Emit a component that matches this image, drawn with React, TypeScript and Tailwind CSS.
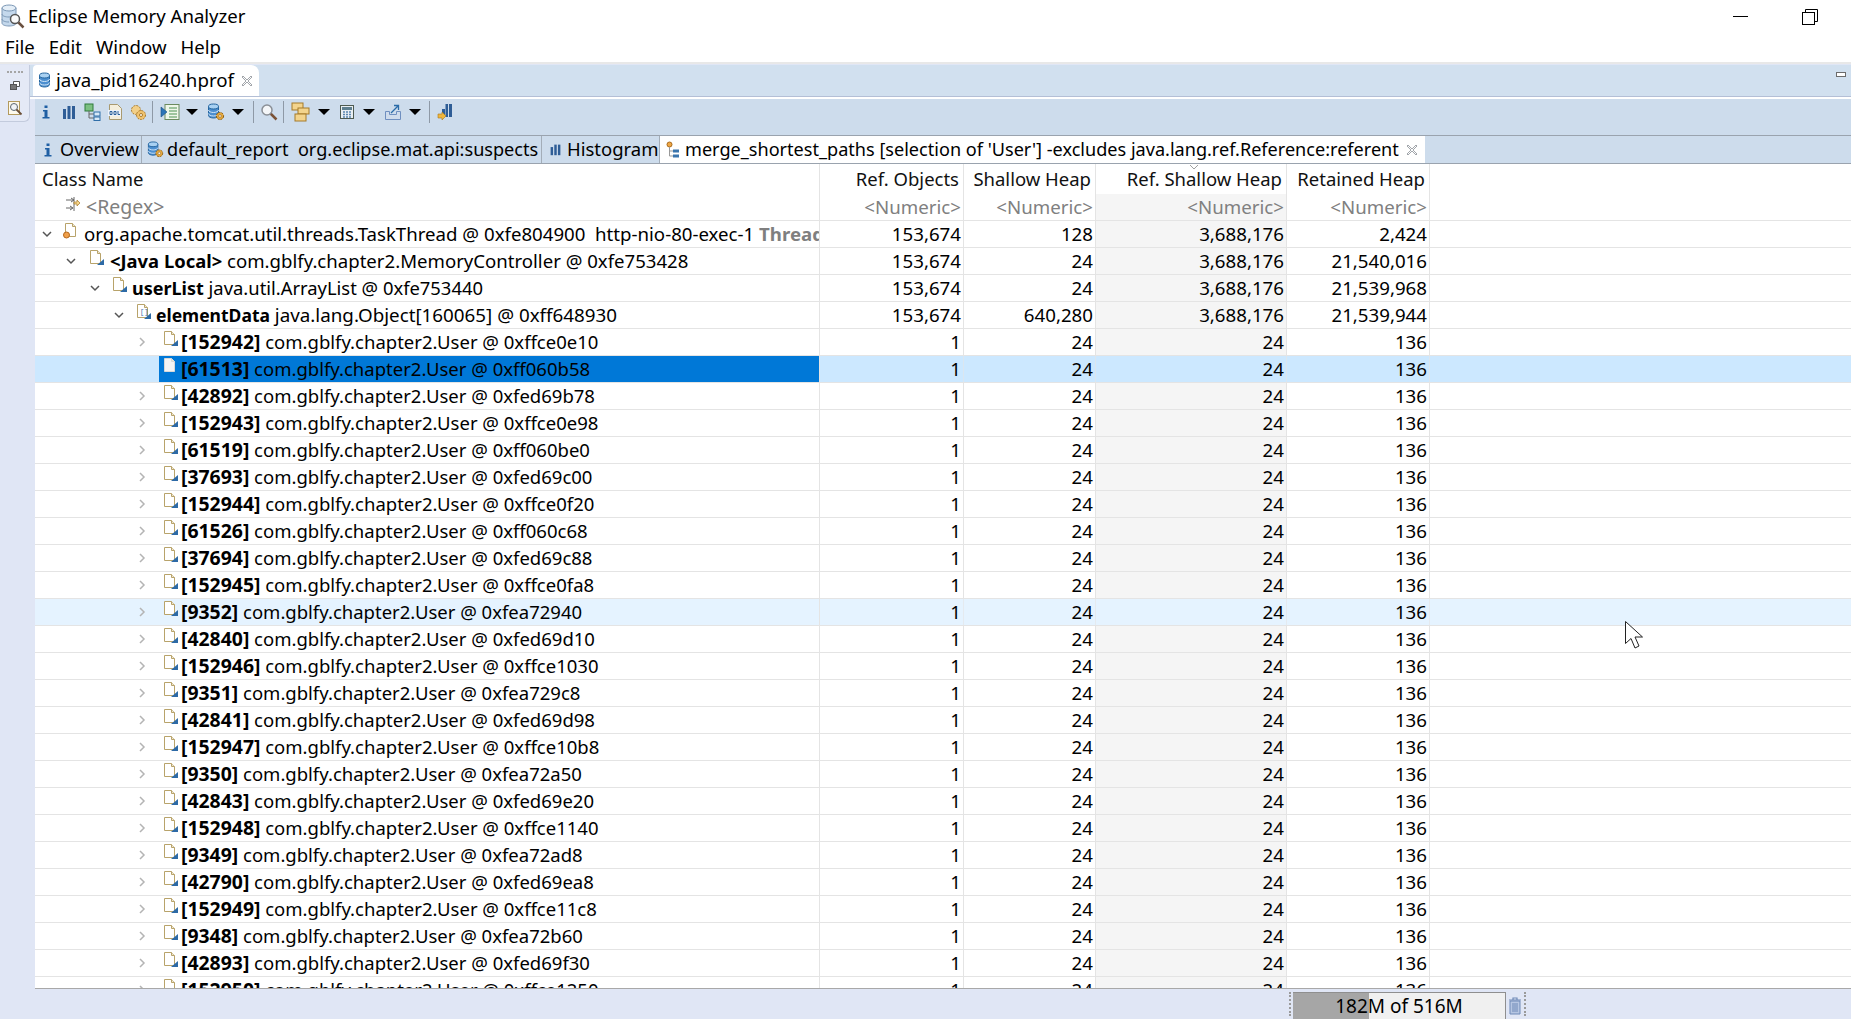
import type { ReactNode } from 'react';

const FONT = "font-['Noto_Sans',sans-serif]";

type TreeRow = {
  level: number;
  bold: string;
  text: string;
  kind: 'thread' | 'object' | 'array';
  values: string[];
  muted?: string;
  boldSize?: string;
  textSize?: string;
};

const TOP_ROWS: TreeRow[] = [
  { level: 0, bold: '', text: 'org.apache.tomcat.util.threads.TaskThread @ 0xfe804900  http-nio-80-exec-1 ', muted: 'Thread', kind: 'thread', textSize: 'text-[18.65px]', values: ['153,674', '128', '3,688,176', '2,424'] },
  { level: 1, bold: '<Java Local>', text: ' com.gblfy.chapter2.MemoryController @ 0xfe753428', kind: 'object', boldSize: 'text-[18.4px]', textSize: 'text-[18.6px]', values: ['153,674', '24', '3,688,176', '21,540,016'] },
  { level: 2, bold: 'userList', text: ' java.util.ArrayList @ 0xfe753440', kind: 'object', boldSize: 'text-[18px]', textSize: 'text-[18.4px]', values: ['153,674', '24', '3,688,176', '21,539,968'] },
  { level: 3, bold: 'elementData', text: ' java.lang.Object[160065] @ 0xff648930', kind: 'array', boldSize: 'text-[17.5px]', textSize: 'text-[18.8px]', values: ['153,674', '640,280', '3,688,176', '21,539,944'] },
];

const USERS: [string, string][] = [
  ['152942', '0xffce0e10'],
  ['61513', '0xff060b58'],
  ['42892', '0xfed69b78'],
  ['152943', '0xffce0e98'],
  ['61519', '0xff060be0'],
  ['37693', '0xfed69c00'],
  ['152944', '0xffce0f20'],
  ['61526', '0xff060c68'],
  ['37694', '0xfed69c88'],
  ['152945', '0xffce0fa8'],
  ['9352', '0xfea72940'],
  ['42840', '0xfed69d10'],
  ['152946', '0xffce1030'],
  ['9351', '0xfea729c8'],
  ['42841', '0xfed69d98'],
  ['152947', '0xffce10b8'],
  ['9350', '0xfea72a50'],
  ['42843', '0xfed69e20'],
  ['152948', '0xffce1140'],
  ['9349', '0xfea72ad8'],
  ['42790', '0xfed69ea8'],
  ['152949', '0xffce11c8'],
  ['9348', '0xfea72b60'],
  ['42893', '0xfed69f30'],
  ['152950', '0xffce1250'],
];

const INDENT = ['w-0', 'w-[24px]', 'w-[48px]', 'w-[72px]', 'w-[95px]'];
const ICON_BOX = ['w-[25px]', 'w-[27px]', 'w-[25px]', 'w-[25px]', 'ml-[5px] w-[22px]'];

function PageIcon({ kind = 'object', pale = false }: { kind?: 'thread' | 'object' | 'array'; pale?: boolean }) {
  return (
    <svg width="17" height="18" viewBox="0 0 17 18" className="shrink-0">
      <path d="M2.5 1.5h7l3 3v10h-10z" fill={pale ? '#f4f4f4' : '#fff'} stroke={pale ? '#d8d8d8' : '#b8a36a'} />
      <path d="M9.5 1.5v3h3" fill="#efe8d2" stroke={pale ? '#d8d8d8' : '#b8a36a'} />
      {kind === 'thread' && <circle cx="3.5" cy="13" r="3" fill="#f0a04a" stroke="#b5671c" />}
      {kind === 'array' && <text x="5" y="11" fontSize="7" fill="#3b6ea8" fontFamily="Liberation Mono">[]</text>}
      {kind !== 'thread' && !pale && <path d="M9 16h7v-6z" fill="#2d6aa6" />}
    </svg>
  );
}

function Chevron({ open, dim }: { open: boolean; dim?: boolean }) {
  return (
    <svg width="10" height="10" viewBox="0 0 10 10">
      {open ? (
        <path d="M1 3l4 4 4-4" fill="none" stroke="#555" strokeWidth="1.5" />
      ) : (
        <path d="M3 1l4 4-4 4" fill="none" stroke={dim ? '#b4b4b4' : '#888'} strokeWidth="1.5" />
      )}
    </svg>
  );
}

function ClassCell({ row, open, selected }: { row: TreeRow; open: boolean; selected?: boolean }) {
  return (
    <div className="flex h-full w-[785px] shrink-0 items-center overflow-hidden border-r border-[#e4e4e4]">
      <div className={`${INDENT[row.level]} shrink-0`} />
      <div className="flex w-[24px] shrink-0 justify-center">
        {!selected && <Chevron open={open} dim={!open} />}
      </div>
      <div className={`flex h-full min-w-0 flex-1 items-center ${selected ? 'ml-[5px] bg-[#0078d7]' : ''}`}>
        <div className={`flex ${selected ? 'w-[22px]' : ICON_BOX[row.level]} shrink-0 -translate-y-[3px] justify-center`}>
          <PageIcon kind={row.kind} pale={selected} />
        </div>
        <span className={`whitespace-pre ${row.textSize ?? 'text-[18.5px]'}`}>
          {row.bold && <span className={`font-bold ${row.boldSize ?? 'text-[19.4px]'}`}>{row.bold}</span>}
          {row.text}
          {row.muted && <span className="font-bold text-[#7f7f7f]">{row.muted}</span>}
        </span>
      </div>
    </div>
  );
}

function NumCell({ width, tinted, soft, children }: { width: string; tinted?: boolean; soft?: boolean; children: ReactNode }) {
  return (
    <div className={`flex h-full ${width} shrink-0 items-center justify-end border-r pr-[2px] ${soft ? 'border-[#e4e4e4]/60' : 'border-[#e4e4e4]'} ${tinted ? 'bg-[#f5f5f5]' : ''}`}>
      {children}
    </div>
  );
}

function Row({ row, open, selected, hovered }: { row: TreeRow; open: boolean; selected?: boolean; hovered?: boolean }) {
  const soft = selected || hovered;
  return (
    <div className={`flex h-[27px] shrink-0 items-center border-b border-[#e4e4e4] text-black ${selected ? 'bg-[#cce8ff]' : hovered ? 'bg-[#e5f3ff]' : ''}`}>
      <ClassCell row={row} open={open} selected={selected} />
      <div className="contents text-[18.7px]">
        <NumCell width="w-[144px]" soft={soft}>{row.values[0]}</NumCell>
        <NumCell width="w-[132px]" soft={soft}>{row.values[1]}</NumCell>
        <NumCell width="w-[191px]" soft={soft} tinted={!soft}>{row.values[2]}</NumCell>
        <NumCell width="w-[143px]" soft={soft}>{row.values[3]}</NumCell>
      </div>
    </div>
  );
}

function DropArrow() {
  return <div className="h-0 w-0 border-x-[6px] border-t-[6px] border-x-transparent border-t-black" />;
}

function ToolSep() {
  return <div className="h-[22px] w-px shrink-0 bg-[#8e99a6]" />;
}

function Slot({ width, children }: { width: string; children: ReactNode }) {
  return <div className={`flex ${width} shrink-0 justify-center`}>{children}</div>;
}

function DbIcon({ gear = true, size = 18 }: { gear?: boolean; size?: number }) {
  return (
    <svg width={size} height={size} viewBox="0 0 18 18" className="shrink-0">
      <path d="M1.5 3.5v9c0 1.5 2.5 2.5 5 2.5s5-1 5-2.5v-9z" fill="#4c8fd0" stroke="#24659f" />
      <ellipse cx="6.5" cy="3.5" rx="5" ry="2.5" fill="#a9d1f2" stroke="#24659f" />
      <path d="M1.5 7c0 1.5 2.5 2.5 5 2.5s5-1 5-2.5M1.5 10.5c0 1.5 2.5 2.5 5 2.500s5-1 5-2.500" fill="none" stroke="#cfe4f6" />
      {gear && (
        <>
          <circle cx="13" cy="13" r="3.600" fill="#e5a93d" stroke="#8a5a12" strokeDasharray="2 1" />
          <circle cx="13" cy="13" r="1.300" fill="#fff" stroke="#8a5a12" strokeWidth="0.600" />
        </>
      )}
    </svg>
  );
}

function BarsIcon({ size = 16 }: { size?: number }) {
  return (
    <svg width={size} height={size} viewBox="0 0 16 16" className="shrink-0">
      <rect x="2" y="5" width="3" height="10" fill="#2e5d96" />
      <rect x="6.5" y="2" width="3" height="13" fill="#2e5d96" />
      <rect x="11" y="2" width="3" height="13" fill="#2e5d96" />
    </svg>
  );
}

function InfoIcon() {
  return (
    <svg width="12" height="16" viewBox="0 0 12 16" className="shrink-0">
      <rect x="4.5" y="1.5" width="3" height="2.5" fill="#1f5fa3" />
      <path d="M3 6h4.5v7H9.5v1.500H2.500V13h2V7.500H3z" fill="#1f5fa3" />
    </svg>
  );
}

function MergeIcon() {
  return (
    <svg width="14" height="18" viewBox="0 0 14 18" className="shrink-0">
      <circle cx="3.5" cy="3.5" r="2.5" fill="#efa745" stroke="#a9691a" />
      <path d="M3.5 6v9M3.5 10h4M3.5 15h4" stroke="#999" fill="none" />
      <rect x="7" y="8.5" width="6" height="3" fill="#3a75ad" />
      <rect x="7" y="13.5" width="6" height="3" fill="#3a75ad" />
    </svg>
  );
}

function Toolbar() {
  return (
    <div className="flex h-[36px] shrink-0 items-center bg-[#cddcec] pb-[10px]">
      <Slot width="w-[22px]"><InfoIcon /></Slot>
      <Slot width="w-[24px]"><BarsIcon /></Slot>
      <Slot width="w-[24px]">
        <svg width="18" height="18" viewBox="0 0 18 18" className="shrink-0">
          <rect x="1" y="1" width="8" height="7" fill="#7cc082" stroke="#2f7a3a" />
          <path d="M5 8v7h5M5 11h5" stroke="#666" fill="none" />
          <rect x="10" y="9" width="6" height="4" fill="#d7e8f7" stroke="#2f6ea8" />
          <rect x="10" y="14" width="6" height="3.5" fill="#d7e8f7" stroke="#2f6ea8" />
        </svg>
      </Slot>
      <Slot width="w-[20px]">
        <svg width="17" height="18" viewBox="0 0 17 18" className="shrink-0">
          <path d="M2.5 1.500h8l4 4v11h-12z" fill="#f5efdd" stroke="#a99a70" />
          <rect x="1" y="7" width="13" height="6" fill="#eef3f9" />
          <path d="M3 8.500h2v3H3zM7 8.500h2v3H7z" fill="none" stroke="#2a5f98" />
          <path d="M11 8v3.500h2" fill="none" stroke="#2a5f98" />
        </svg>
      </Slot>
      <Slot width="w-[26px]">
        <svg width="18" height="18" viewBox="0 0 18 18" className="shrink-0">
          <circle cx="7" cy="7" r="4.500" fill="#f2cf87" stroke="#a87a2a" strokeDasharray="2 1" />
          <circle cx="12" cy="12" r="4.500" fill="#f0c26e" stroke="#a87a2a" strokeDasharray="2 1" />
          <circle cx="12" cy="12" r="1.500" fill="#fff" stroke="#a87a2a" />
        </svg>
      </Slot>
      <Slot width="w-[2px]"><ToolSep /></Slot>
      <Slot width="w-[34px]">
        <svg width="20" height="18" viewBox="0 0 20 18" className="shrink-0">
          <rect x="5" y="1.500" width="14" height="15" fill="#eef6ea" stroke="#6b8a5f" />
          <path d="M9 5h8M9 8h8M9 11h8M9 14h8" stroke="#4d9252" />
          <path d="M1 4l6 5-6 5z" fill="#2b74b8" stroke="#1b4f82" strokeWidth="0.600" />
        </svg>
      </Slot>
      <Slot width="w-[10px]"><DropArrow /></Slot>
      <Slot width="w-[38px]"><DbIcon /></Slot>
      <Slot width="w-[6px]"><DropArrow /></Slot>
      <Slot width="w-[24px]"><ToolSep /></Slot>
      <Slot width="w-[8px]">
        <svg width="18" height="18" viewBox="0 0 18 18" className="shrink-0">
          <path d="M10.500 10.500l6 6" stroke="#7a5236" strokeWidth="2.500" />
          <circle cx="7" cy="7" r="5" fill="#f4f6f8" stroke="#8a8f96" strokeWidth="1.500" />
        </svg>
      </Slot>
      <Slot width="w-[20px]"><ToolSep /></Slot>
      <Slot width="w-[16px]">
        <svg width="20" height="20" viewBox="0 0 20 20" className="shrink-0">
          <rect x="1" y="1" width="11" height="7" fill="#f3d48d" stroke="#a67a28" />
          <rect x="7" y="6" width="11" height="6" fill="#f3d48d" stroke="#a67a28" />
          <rect x="4" y="12" width="11" height="7" fill="#f3d48d" stroke="#a67a28" />
        </svg>
      </Slot>
      <Slot width="w-[30px]"><DropArrow /></Slot>
      <Slot width="w-[16px]">
        <svg width="16" height="16" viewBox="0 0 16 16" className="shrink-0">
          <rect x="1.500" y="1.500" width="13" height="13" fill="#e8eef2" stroke="#4d5a50" />
          <rect x="3" y="3" width="10" height="3" fill="#5d7f8f" />
          <path d="M4 8h2M7 8h2M10 8h2M4 10.500h2M7 10.500h2M10 10.500h2M4 13h2M7 13h2M10 13h2" stroke="#5a86b0" strokeWidth="1.400" />
        </svg>
      </Slot>
      <Slot width="w-[28px]"><DropArrow /></Slot>
      <Slot width="w-[20px]">
        <svg width="18" height="18" viewBox="0 0 18 18" className="shrink-0">
          <path d="M1.500 8.500v8h15v-8h-4v3h-7v-3z" fill="#cfdcec" stroke="#6f8fc0" />
          <path d="M7 10l7-7M10 2.500h4.500V7" fill="none" stroke="#2a6ba8" strokeWidth="1.300" />
        </svg>
      </Slot>
      <Slot width="w-[24px]"><DropArrow /></Slot>
      <Slot width="w-[4px]"><ToolSep /></Slot>
      <Slot width="w-[28px]">
        <svg width="16" height="18" viewBox="0 0 16 18" className="shrink-0">
          <rect x="5" y="6" width="3" height="8" fill="#2e5d96" />
          <rect x="8.500" y="1" width="2.500" height="13" fill="#2e5d96" />
          <rect x="12" y="1" width="3" height="13" fill="#2e5d96" />
          <path d="M1 11h4v-2l4 4-4 4v-2H1z" fill="#f0b63c" stroke="#a8791c" strokeWidth="0.600" />
        </svg>
      </Slot>
    </div>
  );
}

function EditorTab({ icon, label, width, active, close, size = 'text-[18.1px]' }: { icon: ReactNode; label: string; width: string; active?: boolean; close?: boolean; size?: string }) {
  return (
    <div className={`flex h-full shrink-0 items-center border-r border-[#a3adb8] pl-[5px] ${width} ${active ? 'border-r-0 bg-white' : ''}`}>
      <div className="flex w-[16px] shrink-0 justify-center">{icon}</div>
      <span className={`ml-[4px] whitespace-pre ${size}`}>{label}</span>
      {close && <CloseX />}
    </div>
  );
}

function CloseX() {
  return (
    <svg width="12" height="12" viewBox="0 0 12 12" className="ml-[7px] shrink-0">
      <path d="M2 1l4 4 4-4 1 1-4 4 4 4-1 1-4-4-4 4-1-1 4-4-4-4z" fill="#fff" stroke="#8a8f96" strokeWidth="0.800" />
    </svg>
  );
}

function Grip() {
  return <div className="h-[24px] w-0 border-l-2 border-dotted border-[#9a9a9a]" />;
}

export default function App() {
  return (
    <div className={`flex h-[1019px] w-[1851px] flex-col overflow-hidden bg-[#e0e6f5] text-[18.6px] leading-none text-black ${FONT}`}>
      {/* title bar */}
      <div className="flex h-[33px] shrink-0 items-center bg-white">
        <svg width="24" height="26" viewBox="0 0 24 26" className="ml-[1px] shrink-0">
          <path d="M1 4v15c0 2 3.500 3 7 3s7-1 7-3V4z" fill="#c4d8ec" stroke="#7c98b6" />
          <ellipse cx="8" cy="4" rx="7" ry="3" fill="#e4eef7" stroke="#7c98b6" />
          <path d="M1 10c0 2 3.500 3 7 3s7-1 7-3M1 15c0 2 3.500 3 7 3" fill="none" stroke="#7c98b6" />
          <circle cx="14" cy="15" r="4.500" fill="#fafafa" stroke="#555" strokeWidth="1.500" />
          <path d="M17.500 18.500l5 5" stroke="#6a5040" strokeWidth="2.500" />
        </svg>
        <span className="ml-[3px]">Eclipse Memory Analyzer</span>
        <div className="ml-auto mr-[54px] h-px w-[15px] bg-black" />
        <svg width="16" height="16" viewBox="0 0 16 16" className="mr-[33px]">
          <path d="M3.500 3.500v-3h12v12h-3" fill="none" stroke="#000" />
          <rect x="0.500" y="3.500" width="12" height="12" fill="#fff" stroke="#000" />
        </svg>
      </div>

      {/* menu bar */}
      <div className="flex h-[29px] shrink-0 items-center gap-[14px] bg-white pl-[5px]">
        <span>File</span>
        <span>Edit</span>
        <span>Window</span>
        <span>Help</span>
      </div>
      <div className="h-[2px] shrink-0 bg-[#e8e8e8]" />

      <div className="flex min-h-0 flex-1">
        {/* trim stack */}
        <div className="mt-[1px] h-[57px] w-[30px] shrink-0 rounded-br-[6px] border-r border-b border-[#c3cbdd] bg-[#e4e9f6]">
          <div className="mx-auto mt-[6px] w-[16px] border-t-2 border-dotted border-[#a5a5a5]" />
          <svg width="14" height="14" viewBox="0 0 14 14" className="mx-auto mt-[6px]">
            <path d="M5.500 5V2.500h6v5H9" fill="#fff" stroke="#555" />
            <rect x="2.500" y="5.500" width="6" height="5" fill="#777" stroke="#555" />
          </svg>
          <svg width="16" height="16" viewBox="0 0 16 16" className="mx-auto mt-[7px]">
            <rect x="1.500" y="1.500" width="11" height="13" fill="#fdf9ec" stroke="#b39a5d" />
            <circle cx="7" cy="7" r="3.500" fill="#f0f4f7" stroke="#5b6670" />
            <path d="M9.500 9.500l5 5" stroke="#6a4e35" strokeWidth="1.800" />
          </svg>
        </div>

        <div className="flex min-w-0 flex-1 flex-col">
          {/* editor tab strip */}
          <div className="mt-[1px] flex h-[32px] shrink-0 items-stretch border-b border-[#b4bfd6] bg-[#d1e0ef] pl-[3px]">
            <div className="flex w-[226px] items-center rounded-tl-[4px] rounded-tr-[8px] bg-white pl-[5px]">
              <DbIcon gear={false} size={18} />
              <span className="whitespace-pre text-[18.7px]">java_pid16240.hprof</span>
              <CloseX />
            </div>
            <div className="relative ml-auto">
              <div className="mr-[5px] mt-[7px] h-[5px] w-[10px] border border-[#6b6b6b] bg-white" />
            </div>
          </div>

          <div className="h-[2px] shrink-0 bg-white" />

          <div className="flex min-h-0 flex-1 flex-col pl-[5px]">
            <Toolbar />

            <div className="flex h-[29px] shrink-0 items-center border-y border-[#9aa3ae] bg-[#cddcec]">
              <EditorTab icon={<InfoIcon />} label="Overview" width="w-[107px]" />
              <EditorTab icon={<DbIcon size={17} />} label="default_report  org.eclipse.mat.api:suspects" width="w-[400px]" />
              <EditorTab icon={<BarsIcon size={13} />} label="Histogram" width="w-[118px]" size="text-[18.5px]" />
              <EditorTab icon={<MergeIcon />} label="merge_shortest_paths [selection of 'User'] -excludes java.lang.ref.Reference:referent" width="w-[765px]" active close />
            </div>

            {/* table */}
            <div className="relative min-h-0 flex-1 overflow-hidden border-b border-[#a8a8a8] bg-white">
              <div className="flex h-[30px] items-center text-[18.5px] text-[#111]">
                <div className="flex h-full w-[785px] shrink-0 items-center border-r border-[#e4e4e4] pl-[7px]">Class Name</div>
                <div className="flex h-full w-[144px] shrink-0 items-center justify-end border-r border-[#e4e4e4] pr-[4px]">Ref. Objects</div>
                <div className="flex h-full w-[132px] shrink-0 items-center justify-end border-r border-[#e4e4e4] pr-[4px]">Shallow Heap</div>
                <div className="flex h-full w-[191px] shrink-0 items-center justify-end border-r border-[#e4e4e4] pr-[4px]">Ref. Shallow Heap</div>
                <div className="flex h-full w-[143px] shrink-0 items-center justify-end border-r border-[#e4e4e4] pr-[4px]">Retained Heap</div>
              </div>
              <div className="flex h-[27px] items-center border-b border-[#e4e4e4] text-[18.7px] text-[#808080]">
                <div className="flex h-full w-[785px] shrink-0 items-center border-r border-[#e4e4e4] pl-[30px]">
                  <svg width="16" height="18" viewBox="0 0 16 18" className="-translate-y-[2px]">
                    <path d="M1 4h8M1 12h6M6 2l3 2-3 2M5 10l3 2-3 2M9 1v14" fill="none" stroke="#666" />
                    <path d="M9 6h3V4l3 3-3 3V8H9z" fill="#f4d48a" stroke="#a67a28" strokeWidth="0.700" />
                  </svg>
                  <span className="ml-[5px] text-[19.5px]">&lt;Regex&gt;</span>
                </div>
                <NumCell width="w-[144px]">&lt;Numeric&gt;</NumCell>
                <NumCell width="w-[132px]">&lt;Numeric&gt;</NumCell>
                <NumCell width="w-[191px]" tinted>&lt;Numeric&gt;</NumCell>
                <NumCell width="w-[143px]">&lt;Numeric&gt;</NumCell>
              </div>

              {TOP_ROWS.map((row) => (
                <Row key={row.bold || row.text} row={row} open />
              ))}
              {USERS.map(([idx, addr]) => (
                <Row
                  key={idx}
                  row={{ level: 4, bold: `[${idx}]`, text: ` com.gblfy.chapter2.User @ ${addr}`, kind: 'object', values: ['1', '24', '24', '136'] }}
                  open={false}
                  selected={idx === '61513'}
                  hovered={idx === '9352'}
                />
              ))}

              {/* sort marker in the header */}
              <svg width="10" height="6" viewBox="0 0 10 6" className="absolute left-[1154px] top-[1px]">
                <path d="M1 0l4 4 4-4" fill="none" stroke="#a0a0a0" />
              </svg>
              {/* mouse pointer */}
              <svg width="20" height="30" viewBox="0 0 20 30" className="absolute left-[1589px] top-[456px]">
                <path d="M1.500 1.500v22l5.500-5 4 9.500 4-2-4-9h7.500z" fill="#fff" stroke="#222" />
              </svg>
            </div>
          </div>
        </div>
      </div>

      {/* status bar */}
      <div className="flex h-[30px] shrink-0 items-center bg-[#e0e6f5]">
        <div className="ml-[1289px]"><Grip /></div>
        <div className="relative ml-[2px] mt-[3px] flex h-[27px] w-[213px] shrink-0 items-center justify-center overflow-hidden border-r border-t border-[#8f8f8f] bg-[#f0f0f0]">
          <div className="absolute inset-y-0 left-0 w-[76px] bg-[#a6a6a6]" />
          <span className="relative whitespace-pre text-[19px]">182M of 516M</span>
        </div>
        <svg width="16" height="20" viewBox="0 0 16 20" className="ml-[1px] mt-[3px]">
          <path d="M2 4h12M6 4V2h4v2" fill="none" stroke="#6f8ab8" strokeWidth="1.200" />
          <path d="M3 5h10v13H3z" fill="#b6c6e2" stroke="#6f8ab8" />
          <path d="M6 7v9M8 7v9M10 7v9" stroke="#6f8ab8" />
        </svg>
        <div className="ml-[1px]"><Grip /></div>
      </div>
    </div>
  );
}
